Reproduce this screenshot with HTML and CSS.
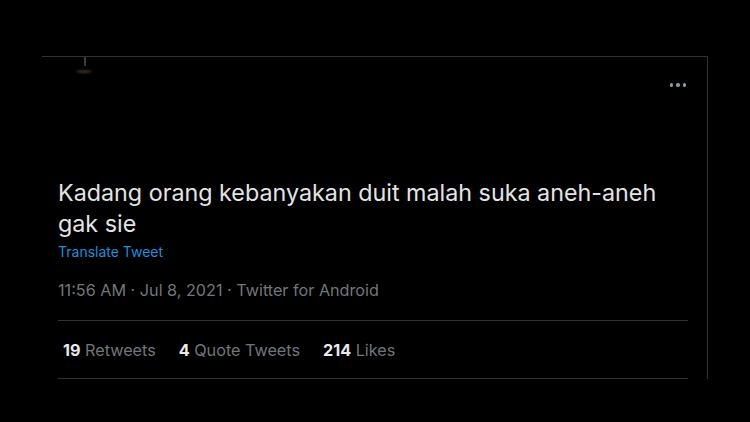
FILE: index.html
```html
<!DOCTYPE html>
<html>
<head>
<meta charset="utf-8">
<link rel="stylesheet" href="styles.css">
</head>
<body>
<div class="page">
  <div class="card">
    <div class="thread">
      <div class="thread-line"></div>
      <div class="avatar-hint"></div>
    </div>
    <div class="head">
      <div class="more"><span></span><span></span><span></span></div>
    </div>
    <div class="body">
      <p class="text">Kadang orang kebanyakan duit malah suka aneh-aneh gak sie</p>
      <div class="translate">Translate Tweet</div>
      <div class="meta">11:56 AM · Jul 8, 2021 · Twitter for Android</div>
      <div class="stats">
        <span class="stat"><b>19</b> Retweets</span>
        <span class="stat"><b>4</b> Quote Tweets</span>
        <span class="stat"><b>214</b> Likes</span>
      </div>
    </div>
  </div>
</div>
</body>
</html>
```
FILE: styles.css
```css
html, body {
  margin: 0;
  padding: 0;
  background: #000;
}
body {
  font-family: Inter, "Liberation Sans", Arial, sans-serif;
  width: 750px;
  height: 422px;
  overflow: hidden;
}
.page {
  padding-top: 56px;
  padding-left: 42px;
}
.card {
  position: relative;
  width: 666px;
  height: 323px;
  border-top: 1px solid #2f3336;
  border-right: 1px solid #2f3336;
  padding: 0 19px 0 16px;
  box-sizing: border-box;
}
.thread {
  position: absolute;
  left: 34px;
  top: 0;
  width: 18px;
}
.thread-line {
  width: 2px;
  height: 9px;
  margin-left: 8px;
  background: #3a3d40;
}
.avatar-hint {
  width: 16px;
  height: 3px;
  margin-top: 4px;
  border-radius: 50%;
  background: #3b3227;
  filter: blur(1px);
}
.head {
  display: flex;
  justify-content: flex-end;
  height: 120px;
}
.more {
  display: flex;
  gap: 3px;
  margin-top: 26px;
  margin-right: 2px;
  height: 4px;
}
.more span {
  width: 3.5px;
  height: 3.5px;
  border-radius: 50%;
  background: #8b98a5;
}
.text {
  margin: 0;
  font-size: 23.3px;
  line-height: 31px;
  color: #e2e4e5;
  width: 620px;
}
.translate {
  margin-top: 4px;
  font-size: 14px;
  line-height: 18px;
  color: #1d8fdb;
}
.meta {
  margin-top: 19px;
  font-size: 16.2px;
  line-height: 20px;
  color: #71767b;
}
.stats {
  margin-top: 20px;
  border-top: 1px solid #2f3336;
  border-bottom: 1px solid #2f3336;
  height: 57px;
  display: flex;
  align-items: center;
  gap: 23px;
  padding-left: 5px;
  font-size: 16.2px;
  color: #71767b;
}
.stat b {
  color: #e7e9ea;
  font-weight: 700;
}
```
